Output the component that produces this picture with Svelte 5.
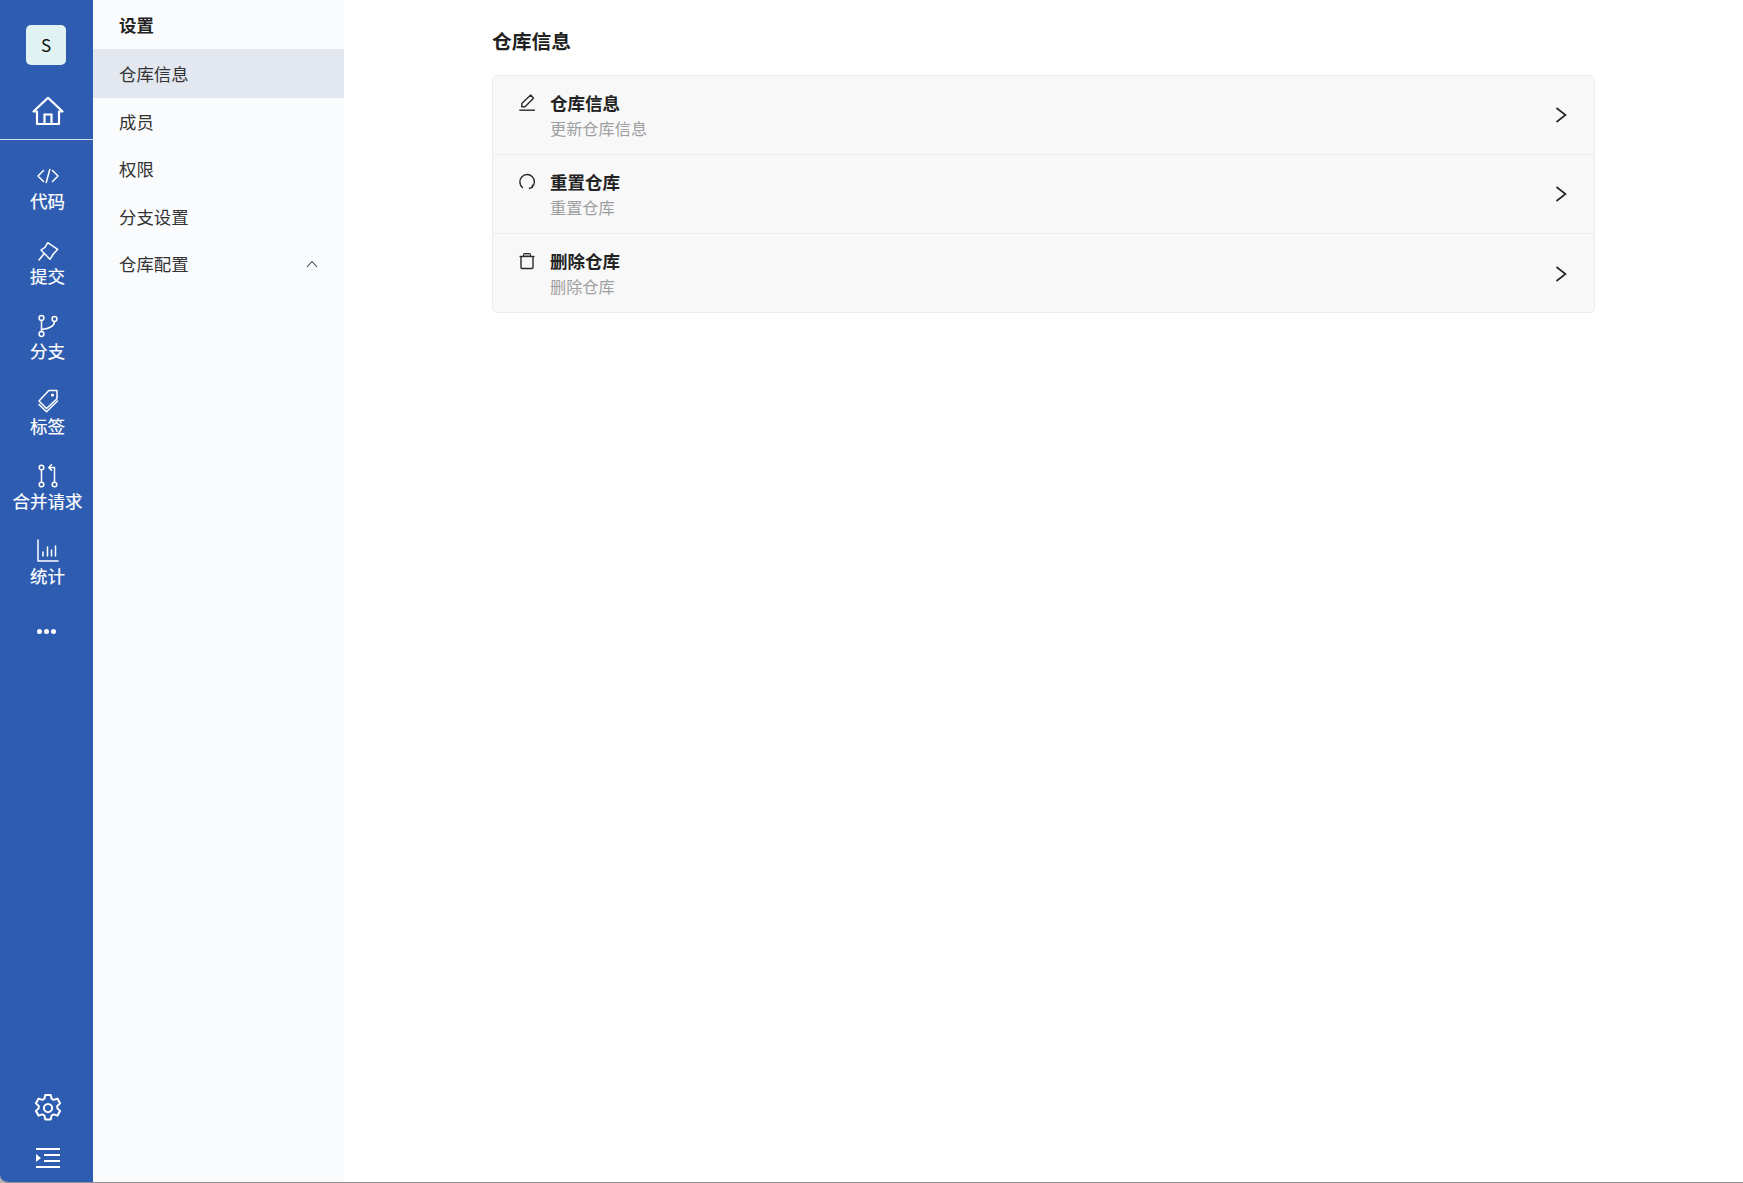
<script>
  const rail = [
    { label: '代码', icon: 'code' },
    { label: '提交', icon: 'pin' },
    { label: '分支', icon: 'branch' },
    { label: '标签', icon: 'tag' },
    { label: '合并请求', icon: 'pr' },
    { label: '统计', icon: 'chart' }
  ];
  const menu = ['仓库信息', '成员', '权限', '分支设置'];
  const rows = [
    { title: '仓库信息', sub: '更新仓库信息', icon: 'edit' },
    { title: '重置仓库', sub: '重置仓库', icon: 'reset' },
    { title: '删除仓库', sub: '删除仓库', icon: 'trash' }
  ];
</script>

<div class="window">
  <nav class="rail">
    <div class="top">
      <div class="avatar">S</div>
      <svg class="home" viewBox="0 0 32 30" width="32" height="30" fill="none" stroke="#fff" stroke-width="2.2">
        <path d="M1.500 15.500 16 1.800l14.500 13.700h-3.500v12.500H5V15.500z" stroke-linejoin="round" />
        <path d="M12.500 28v-9.500h7V28" />
      </svg>
    </div>
    <ul class="rail-items">
      {#each rail as item}
        <li class="rail-item">
          <svg viewBox="0 0 24 24" width="24" height="24" fill="none" stroke="#fff" stroke-width="1.500" stroke-linecap="round" stroke-linejoin="round">
            {#if item.icon === 'code'}
              <path d="M7.500 6.500 2 12l5.500 5.500M16.500 6.500 22 12l-5.500 5.500M13.800 5.500l-3.600 13" />
            {:else if item.icon === 'pin'}
              <path d="M11.700 3.700 21.700 10.300 17.300 15 14 20.300 5 11 9 8.300z" />
              <path d="M8 14.700 3 21" />
            {:else if item.icon === 'branch'}
              <circle cx="5.500" cy="4" r="2.400" />
              <circle cx="5.500" cy="20" r="2.400" />
              <circle cx="18.500" cy="5" r="2.400" />
              <path d="M5.500 6.400v11.200M5.500 15.500c8-1 13-3 13-8.100" />
            {:else if item.icon === 'tag'}
              <path d="M12.800 1.500h8.200v8.200L10.500 19.500 3 12z" />
              <path d="m3 15.500 7.500 7.300L21.500 12" />
              <circle cx="16.500" cy="6" r=".8" fill="#fff" />
            {:else if item.icon === 'pr'}
              <circle cx="5.500" cy="3.500" r="2.300" />
              <circle cx="5.500" cy="20.500" r="2.300" />
              <circle cx="18.500" cy="20.500" r="2.300" />
              <path d="M5.500 5.800v12.400M18.500 18.200V3.500h-5.500M15.500.8 12.800 3.500l2.700 2.700" />
            {:else if item.icon === 'chart'}
              <path d="M2 1v21h20" />
              <path d="M7 17v-4M11.500 17V8M15.500 17v-6M19.500 17V7" />
            {/if}
          </svg>
          <span>{item.label}</span>
        </li>
      {/each}
      <li class="dots"><i></i><i></i><i></i></li>
    </ul>
    <div class="rail-foot">
      <svg viewBox="0 0 24 24" width="30" height="30" fill="none" stroke="#fff" stroke-width="1.600" stroke-linejoin="round">
        <circle cx="12" cy="12" r="3.300" />
        <path d="M14.200 1.500h-4.400l-.7 3.100-1.600.9-3-1-2.200 3.800 2.300 2.100v1.800L2.300 14.300l2.200 3.800 3-1 1.600.9.700 3.100h4.400l.7-3.100 1.600-.9 3 1 2.200-3.800-2.300-2.100v-1.800l2.300-2.100-2.200-3.800-3 1-1.600-.9z" />
      </svg>
      <svg viewBox="0 0 24 20" width="24" height="20" fill="#fff">
        <rect x="0" y="0" width="24" height="2" />
        <rect x="8" y="6" width="16" height="2" />
        <rect x="8" y="12" width="16" height="2" />
        <rect x="0" y="18" width="24" height="2" />
        <path d="M0 6v8l5-4z" />
      </svg>
    </div>
  </nav>

  <aside class="menu">
    <h2>设置</h2>
    <ul>
      {#each menu as m, i}
        <li class:active={i === 0}>{m}</li>
      {/each}
      <li class="group">
        <span>仓库配置</span>
        <svg viewBox="0 0 12 8" width="12" height="8" fill="none" stroke="#444" stroke-width="1.100"><path d="m1 7 5-5.500L11 7" /></svg>
      </li>
    </ul>
  </aside>

  <main class="content">
    <h1>仓库信息</h1>
    <div class="card">
      {#each rows as r}
        <div class="row">
          <svg class="row-icon" viewBox="0 0 18 18" width="18" height="18" fill="none" stroke="#2b2b2b" stroke-width="1.400" stroke-linejoin="round">
            {#if r.icon === 'edit'}
              <path d="M1.300 16.200h15.700" />
              <path d="M4 9.300 12.700 1l2.800 3.300L7 12.700H3.700z" />
            {:else if r.icon === 'reset'}
              <path d="M4.500 14.500A7.300 7.300 0 1 1 14 14.300" stroke-linecap="round" />
              <path d="M11 15.500l3.200-1.100.3-2.700" />
            {:else}
              <path d="M5 4.500l.8-3h6.400l.8 3z" fill="#aaa" stroke-width="1" />
              <path d="M1.500 4.500h15" />
              <path d="M3 4.500v11a1 1 0 0 0 1 1h10a1 1 0 0 0 1-1v-11" />
            {/if}
          </svg>
          <div class="row-text">
            <strong>{r.title}</strong>
            <span>{r.sub}</span>
          </div>
          <svg class="chev" viewBox="0 0 12 18" width="12" height="18" fill="none" stroke="#222" stroke-width="1.600"><path d="m1.500 2 9 7-9 7" /></svg>
        </div>
      {/each}
    </div>
  </main>
</div>

<style>
  :global(body) {
    margin: 0;
    background: #b9b5ad;
  }
  .window {
    display: flex;
    height: 1182px;
    border-bottom: 1px solid #8f8f8f;
    border-bottom-left-radius: 8px;
    overflow: hidden;
    background: #fff;
    font-family: "Noto Sans CJK SC", "Noto Sans", sans-serif;
    color: #222;
  }
  ul {
    list-style: none;
    margin: 0;
    padding: 0;
  }
  .rail {
    width: 93px;
    flex: none;
    background: #2e5cb0;
    color: #fff;
    display: flex;
    flex-direction: column;
    align-items: stretch;
  }
  .top {
    display: flex;
    flex-direction: column;
    align-items: center;
    padding-top: 25px;
    height: 114px;
    border-bottom: 1px solid #d5def0;
  }
  .avatar {
    width: 40px;
    height: 40px;
    border-radius: 5px;
    background: #e0f2f1;
    color: #111;
    font-size: 17px;
    line-height: 40px;
    text-align: center;
    margin-left: -1px;
  }
  .home {
    margin-top: 31px;
    margin-left: 2px;
  }
  .rail-items {
    flex: 1;
    padding-top: 24px;
    padding-left: 2px;
  }
  .rail-item {
    height: 75px;
    display: flex;
    flex-direction: column;
    align-items: center;
    font-size: 17.500px;
    line-height: 24px;
    -webkit-text-stroke: 0.2px #fff;
  }
  .rail-item svg {
    display: block;
    margin-bottom: 1px;
  }
  .dots {
    display: flex;
    justify-content: center;
    gap: 2px;
    padding-top: 15px;
    transform: translateX(-1px);
  }
  .dots i {
    width: 5px;
    height: 5px;
    border-radius: 50%;
    background: #fff;
  }
  .rail-foot {
    display: flex;
    flex-direction: column;
    align-items: center;
    gap: 25px;
    padding-bottom: 14px;
    padding-left: 2px;
  }
  .menu {
    width: 251px;
    flex: none;
    background: #fafbfd;
  }
  .menu h2 {
    margin: 0;
    height: 49px;
    padding-left: 26px;
    font-size: 17.400px;
    font-weight: 700;
    line-height: 50px;
    box-sizing: border-box;
    color: #222;
  }
  .menu li {
    height: 47.300px;
    padding-left: 26px;
    padding-right: 26px;
    font-size: 17.400px;
    color: #333;
    display: flex;
    align-items: center;
    justify-content: space-between;
    box-sizing: border-box;
  }
  .menu li.active {
    background: #e2e7f0;
    height: 49px;
  }
  .content {
    flex: 1;
    padding: 0 148px;
    min-width: 0;
  }
  h1 {
    margin: 0;
    height: 75px;
    font-size: 19.800px;
    font-weight: 700;
    line-height: 81px;
    color: #222;
    box-sizing: border-box;
  }
  .card {
    background: #f8f8f8;
    border: 1px solid #ececec;
    border-radius: 6px;
  }
  .row {
    height: 79px;
    box-sizing: border-box;
    display: flex;
    align-items: flex-start;
    padding: 0 27px 0 25px;
    border-bottom: 1px solid #ececec;
  }
  .row:last-child {
    border-bottom: none;
    height: 78px;
  }
  .row:last-child .chev {
    margin-top: 2px;
  }
  .row-icon {
    margin-top: 18px;
    flex: none;
  }
  .row-text {
    flex: 1;
    margin-left: 14px;
    display: flex;
    flex-direction: column;
    padding-top: 14px;
  }
  .row-text strong {
    font-size: 17.500px;
    line-height: 26px;
    font-weight: 700;
    color: #222;
  }
  .row-text span {
    font-size: 16.200px;
    line-height: 25px;
    color: #9f9f9f;
  }
  .chev {
    align-self: center;
  }
</style>
